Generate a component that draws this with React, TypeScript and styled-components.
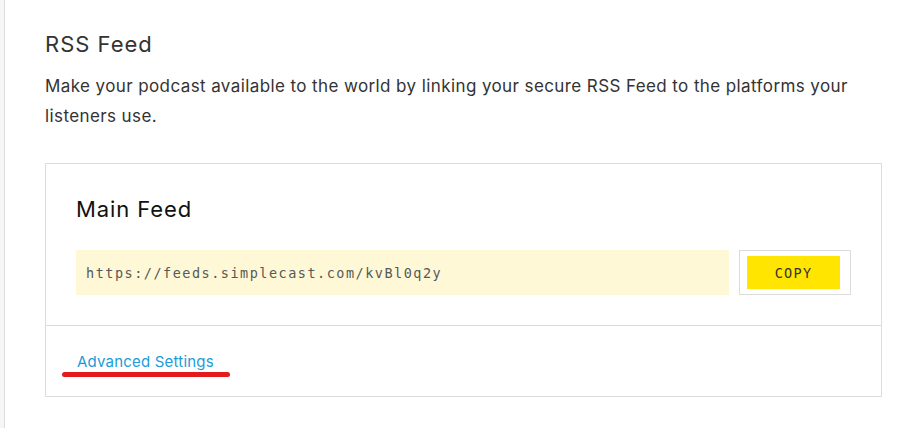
import React from 'react';
import styled, { createGlobalStyle } from 'styled-components';

const GlobalStyle = createGlobalStyle`
  html, body {
    margin: 0;
    padding: 0;
    background: #f6f6f6;
  }
  body {
    font-family: Inter, 'Liberation Sans', Arial, sans-serif;
  }
`;

const Panel = styled.main`
  margin-left: 4px;
  min-height: 428px;
  box-sizing: border-box;
  background: #fff;
  border-left: 1px solid #dcdcdc;
  padding: 31px 40px 0 40px;
`;

const Title = styled.h2`
  margin: 0;
  font-size: 22px;
  line-height: 27px;
  font-weight: 400;
  letter-spacing: 1px;
  color: #333;
`;

const Description = styled.p`
  margin: 13px 0 0;
  max-width: 820px;
  font-size: 17px;
  line-height: 30px;
  letter-spacing: 0.4px;
  color: #333;
`;

const Card = styled.section`
  margin-top: 32px;
  width: 837px;
  box-sizing: border-box;
  border: 1px solid #dcdcdc;
`;

const CardBody = styled.div`
  padding: 33px 30px 30px 30px;
  border-bottom: 1px solid #dcdcdc;
`;

const CardTitle = styled.h3`
  margin: 0;
  font-size: 22px;
  line-height: 24px;
  font-weight: 400;
  letter-spacing: 0.9px;
  color: #111;
`;

const FeedRow = styled.div`
  display: flex;
  gap: 10px;
  margin-top: 29px;
  height: 45px;
`;

const FeedUrl = styled.div`
  flex: 1;
  display: flex;
  align-items: center;
  padding: 0 10px;
  background: #fef8d7;
  font-family: 'DejaVu Sans Mono', 'Liberation Mono', monospace;
  font-size: 13.5px;
  letter-spacing: 1.5px;
  color: #585858;
`;

const CopyFrame = styled.div`
  display: flex;
  box-sizing: border-box;
  width: 112px;
  padding: 5px 10px 5px 7px;
  border: 1px solid #dcdcdc;
`;

const CopyButton = styled.button`
  flex: 1;
  border: none;
  background: #ffe500;
  font-family: 'DejaVu Sans Mono', 'Liberation Mono', monospace;
  font-size: 13.5px;
  letter-spacing: 1.3px;
  color: #333;
  cursor: pointer;
  padding: 0;
`;

const CardFooter = styled.div`
  height: 70px;
  display: flex;
  align-items: center;
  padding-left: 31px;
`;

const AdvancedLink = styled.a`
  position: relative;
  font-size: 15px;
  letter-spacing: 0.2px;
  color: #1b9cd8;
  text-decoration: none;
  cursor: pointer;

  &::after {
    content: '';
    position: absolute;
    left: -15px;
    right: -16px;
    bottom: -6px;
    height: 5px;
    border-radius: 3px;
    background: #e41a1c;
  }
`;

export default function App() {
  return (
    <>
      <GlobalStyle />
      <Panel>
        <Title>RSS Feed</Title>
        <Description>
          Make your podcast available to the world by linking your secure RSS Feed to the
          platforms your listeners use.
        </Description>
        <Card>
          <CardBody>
            <CardTitle>Main Feed</CardTitle>
            <FeedRow>
              <FeedUrl>https://feeds.simplecast.com/kvBl0q2y</FeedUrl>
              <CopyFrame>
                <CopyButton>COPY</CopyButton>
              </CopyFrame>
            </FeedRow>
          </CardBody>
          <CardFooter>
            <AdvancedLink>Advanced Settings</AdvancedLink>
          </CardFooter>
        </Card>
      </Panel>
    </>
  );
}
